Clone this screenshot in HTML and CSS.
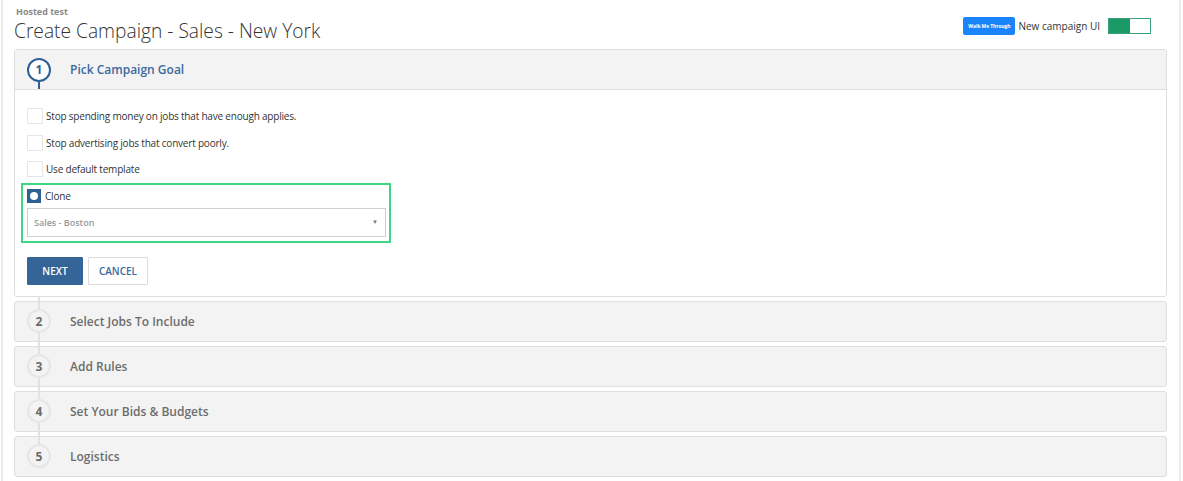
FILE: index.html
```html
<!DOCTYPE html>
<html>
<head>
<meta charset="utf-8">
<link rel="stylesheet" href="styles.css">
</head>
<body>
<div class="frame">
  <header class="top">
    <div class="titles">
      <div class="crumb">Hosted test</div>
      <h1 class="title">Create Campaign - Sales - New York</h1>
    </div>
    <div class="controls">
      <button class="walk">Walk Me Through</button>
      <span class="toggle-label">New campaign UI</span>
      <span class="toggle"><span class="toggle-on"></span></span>
    </div>
  </header>

  <div class="steps">
    <section class="card active">
      <div class="card-head">
        <span class="num num-active">1</span>
        <span class="step-title step-title-active">Pick Campaign Goal</span>
      </div>
      <div class="card-body">
        <label class="opt"><span class="box"></span><span>Stop spending money on jobs that have enough applies.</span></label>
        <label class="opt"><span class="box"></span><span>Stop advertising jobs that convert poorly.</span></label>
        <label class="opt"><span class="box"></span><span>Use default template</span></label>
        <div class="clone">
          <label class="opt opt-clone"><span class="radio"><span class="dot"></span></span><span>Clone</span></label>
          <div class="select"><span>Sales - Boston</span><span class="caret">&#9660;</span></div>
        </div>
        <div class="actions">
          <button class="btn btn-primary">NEXT</button>
          <button class="btn btn-default">CANCEL</button>
        </div>
      </div>
    </section>

    <section class="card step"><span class="num">2</span><span class="step-title">Select Jobs To Include</span></section>
    <section class="card step"><span class="num">3</span><span class="step-title">Add Rules</span></section>
    <section class="card step"><span class="num">4</span><span class="step-title">Set Your Bids &amp; Budgets</span></section>
    <section class="card step last"><span class="num">5</span><span class="step-title">Logistics</span></section>
  </div>
</div>
</body>
</html>
```

FILE: styles.css
```css
* { box-sizing: border-box; }
html, body { margin: 0; padding: 0; background: #fff; }
body {
  font-family: "Open Sans", "Liberation Sans", sans-serif;
  color: #333;
  overflow: hidden;
}
.frame {
  margin-left: 1px;
  width: 1180px;
  height: 481px;
  border-left: 2px solid #ebebeb;
  border-right: 2px solid #ebebeb;
  padding: 0 12px 0 11px;
}
.top {
  display: flex;
  justify-content: space-between;
  align-items: flex-start;
}
.crumb {
  padding-top: 6px;
  font-size: 9px;
  line-height: 12px;
  font-weight: 700;
  color: #8a8a8a;
  padding-left: 2px;
}
.title {
  margin: 0 0 5px 0;
  font-size: 19.2px;
  line-height: 26px;
  font-weight: 300;
  color: #333;
}
.controls {
  display: flex;
  align-items: center;
  margin-top: 17px;
  margin-right: 16px;
}
.walk {
  width: 52px;
  height: 18px;
  padding: 0;
  border: 0;
  border-radius: 2px;
  background: #1a84fb;
  color: #fff;
  font-family: "Open Sans", sans-serif;
  font-size: 5px;
  font-weight: 700;
  letter-spacing: -0.1px;
}
.toggle-label {
  margin-left: 3px;
  font-size: 10px;
  color: #333;
}
.toggle {
  margin-left: 8px;
  width: 43px;
  height: 16px;
  border: 1px solid #3aa077;
  background: #fff;
  display: flex;
}
.toggle-on {
  width: 21px;
  background: #1b9a68;
}
.steps { display: flex; flex-direction: column; }
.card {
  border: 1px solid #dedede;
  border-radius: 3px;
  background: #f3f3f3;
}
.active { background: #fff; }
.card-head {
  position: relative;
  height: 40px;
  display: flex;
  align-items: center;
  background: #f3f3f3;
  border-bottom: 1px solid #dedede;
  border-radius: 3px 3px 0 0;
}
.card-head::after {
  content: "";
  position: absolute;
  left: 23px;
  top: 31px;
  bottom: 0;
  width: 2px;
  background: #2f5f95;
}
.num {
  position: relative;
  z-index: 1;
  flex: none;
  width: 24px;
  height: 24px;
  margin-left: 12px;
  border-radius: 50%;
  border: 2px solid #e6e6e6;
  background: #f3f3f3;
  display: flex;
  align-items: center;
  justify-content: center;
  font-size: 12px;
  font-weight: 700;
  color: #6b6b6b;
}
.num-active {
  border-color: #2f5f95;
  color: #2f5f95;
  background: #fff;
}
.step-title {
  margin-left: 19px;
  font-size: 12px;
  font-weight: 600;
  color: #6d6d6d;
}
.step-title-active { color: #3a6a9d; }
.step {
  position: relative;
  margin-top: 4px;
  height: 41px;
  display: flex;
  align-items: center;
}
.step::before {
  content: "";
  position: absolute;
  left: 23px;
  top: -6px;
  bottom: 0;
  width: 2px;
  background: #e2e2e2;
}
.step.last::before { bottom: 50%; }
.card-body {
  padding: 13px 12px 11px 12px;
}
.opt {
  display: flex;
  align-items: center;
  height: 26.5px;
  font-size: 10px;
  letter-spacing: -0.2px;
  color: #333;
}
.box {
  width: 16px;
  height: 16px;
  border: 1px solid #e6e6e6;
  margin-right: 3px;
  flex: none;
}
.clone {
  margin: 0 0 0 -6px;
  width: 370px;
  border: 2px solid #3dd682;
  padding: 2px 3px 4px 4px;
}
.opt-clone { height: 18px; }
.radio {
  width: 14px;
  height: 14px;
  background: #2f5f95;
  margin-right: 4px;
  display: flex;
  align-items: center;
  justify-content: center;
  flex: none;
}
.dot {
  width: 8px;
  height: 8px;
  border-radius: 50%;
  background: #fff;
}
.select {
  margin-top: 3px;
  height: 29px;
  border: 1px solid #cfcfcf;
  display: flex;
  align-items: center;
  justify-content: space-between;
  padding: 0 7px 0 6px;
  font-size: 9px;
  font-weight: 600;
  color: #999;
}
.caret { font-size: 6px; color: #777; }
.actions {
  display: flex;
  margin-top: 14px;
}
.btn {
  height: 28px;
  font-family: "Open Sans", sans-serif;
  font-size: 10px;
  font-weight: 600;
  padding: 0;
  border-radius: 1px;
}
.btn-primary {
  width: 56px;
  background: #356597;
  border: 1px solid #356597;
  color: #fff;
}
.btn-default {
  margin-left: 5px;
  width: 60px;
  background: #fff;
  border: 1px solid #dcdcdc;
  color: #3a6a9d;
}
```
